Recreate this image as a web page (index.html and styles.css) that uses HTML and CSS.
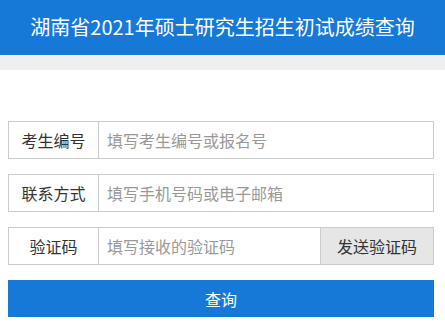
FILE: index.html
```html
<!DOCTYPE html>
<html lang="zh-CN">

<head>
  <meta charset="UTF-8">
  <meta name="viewport" content="width=device-width, initial-scale=1.0">
  <title>成绩查询</title>
  <link rel="stylesheet" href="styles.css">
</head>

<body>
  <div class="header">湖南省2021年硕士研究生招生初试成绩查询</div>
  <div class="divider"></div>

  <div class="container">
    <div class="form-row">
      <label class="form-label" for="ksbh">考生编号</label>
      <input type="text" id="ksbh" class="form-input" placeholder="填写考生编号或报名号">
    </div>
    <div class="form-row">
      <label class="form-label" for="lxfs">联系方式</label>
      <input type="text" id="lxfs" class="form-input" placeholder="填写手机号码或电子邮箱">
    </div>
    <div class="form-row">
      <label class="form-label" for="yzm">验证码</label>
      <input type="text" id="yzm" class="form-input" placeholder="填写接收的验证码">
      <button class="send-btn">发送验证码</button>
    </div>
    <button class="btn">查询</button>
  </div>
</body>

</html>
```

FILE: styles.css
```css
body {
  font-family: "Noto Sans CJK SC", "Liberation Sans", sans-serif;
  margin: 0;
  padding: 0;
  background-color: #fff;
  color: #333;
}

.header {
  height: 55px;
  line-height: 53px;
  background: #1779d7;
  color: #fff;
  font-size: 20px;
  text-align: center;
}

.divider {
  height: 15px;
  background: #efefef;
}

.container {
  padding: 51px 11px 0 8px;
}

.form-row {
  display: flex;
  height: 38px;
  border: 1px solid #ccc;
  box-sizing: border-box;
  margin-bottom: 15px;
}

.form-label {
  width: 89px;
  flex-shrink: 0;
  border-right: 1px solid #ccc;
  display: flex;
  align-items: center;
  justify-content: center;
  font-size: 16px;
  color: #333;
}

.form-input {
  flex: 1;
  min-width: 0;
  border: none;
  outline: none;
  padding: 0 8px;
  font-family: inherit;
  font-size: 16px;
  color: #333;
}

.form-input::placeholder {
  color: #999;
}

.send-btn {
  width: 113px;
  flex-shrink: 0;
  border: none;
  border-left: 1px solid #ccc;
  background: #e6e6e6;
  font-family: inherit;
  font-size: 16px;
  color: #333;
  padding: 0;
}

.btn {
  display: block;
  width: 100%;
  height: 37px;
  margin-top: 1px;
  border: none;
  background: #1779d7;
  color: #fff;
  font-family: inherit;
  font-size: 16px;
  cursor: pointer;
}
```
